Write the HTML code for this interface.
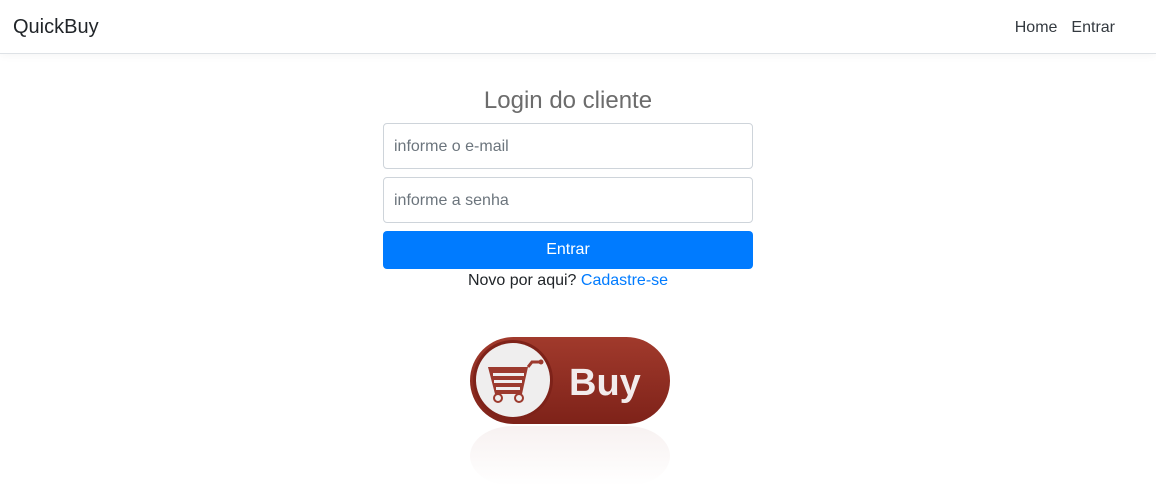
<!DOCTYPE html>
<html><head><meta charset="utf-8"><style>
*{box-sizing:border-box;margin:0;padding:0}
body{width:1156px;height:500px;background:#fff;font-family:"Liberation Sans",Arial,sans-serif;color:#212529;overflow:hidden;position:relative}
.nav{height:54px;border-bottom:1px solid #dee2e6;position:relative;box-shadow:0 2px 8px rgba(0,0,0,0.04)}
.brand{position:absolute;left:13px;top:16px;font-size:20px;color:#212529}
.links{position:absolute;right:41px;top:19px;font-size:16px;color:#343a40}
.links span{margin-left:14px}
h4{position:absolute;left:383px;width:370px;top:87px;text-align:center;font-size:24px;font-weight:400;color:#6c6c6c}
.inp{position:absolute;left:383px;width:370px;height:46px;border:1px solid #ced4da;border-radius:4px;padding:14px 10px 0;font-size:16px;color:#6c757d}
.btn{position:absolute;left:383px;top:231px;width:370px;height:38px;background:#007bff;border-radius:4px;color:#fff;text-align:center;font-size:16px;line-height:38px}
.novo{position:absolute;left:383px;width:370px;top:272px;text-align:center;font-size:16px}
.novo a{color:#007bff;text-decoration:none}
</style></head><body>
<div class="nav"><div class="brand">QuickBuy</div><div class="links"><span>Home</span><span>Entrar</span></div></div>
<h4>Login do cliente</h4>
<div class="inp" style="top:123px">informe o e-mail</div>
<div class="inp" style="top:177px">informe a senha</div>
<div class="btn">Entrar</div>
<div class="novo">Novo por aqui? <a>Cadastre-se</a></div>
<svg style="position:absolute;left:438px;top:320px" width="262" height="170" viewBox="438 320 262 170">
<defs>
<linearGradient id="r" x1="0" y1="0" x2="0" y2="1"><stop offset="0" stop-color="#a13a2c"/><stop offset="1" stop-color="#7e2219"/></linearGradient>
<linearGradient id="f" x1="0" y1="0" x2="0" y2="1"><stop offset="0" stop-color="#f0e4e3"/><stop offset="1" stop-color="#fff"/></linearGradient>
</defs>
<rect x="470" y="426" width="200" height="60" rx="43" fill="url(#f)" opacity="0.5"/>
<rect x="470" y="337" width="200" height="87" rx="43.5" fill="url(#r)"/>
<circle cx="513" cy="380" r="40" fill="#7e2219"/>
<circle cx="513" cy="380" r="37" fill="#efeeee"/>
<g fill="#9c3a2e" stroke="#9c3a2e">
<path d="M488 367 L528 367 L522 394 L495 394 Z" stroke="none"/>
<path d="M528 367 L532 362 L540 362" fill="none" stroke-width="3"/>
<circle cx="541" cy="362" r="2.5" stroke="none"/>
<circle cx="498" cy="398" r="4" stroke-width="2" fill="#efeeee"/>
<circle cx="519" cy="398" r="4" stroke-width="2" fill="#efeeee"/>
</g>
<g fill="#efeeee"><rect x="493" y="373" width="31" height="3"/><rect x="494" y="380" width="28" height="3"/><rect x="496" y="387" width="24" height="3"/></g>
<text x="569" y="395" font-family="Liberation Sans,Arial,sans-serif" font-weight="bold" font-size="38" fill="#f2ecec">Buy</text>
</svg>
</body></html>
